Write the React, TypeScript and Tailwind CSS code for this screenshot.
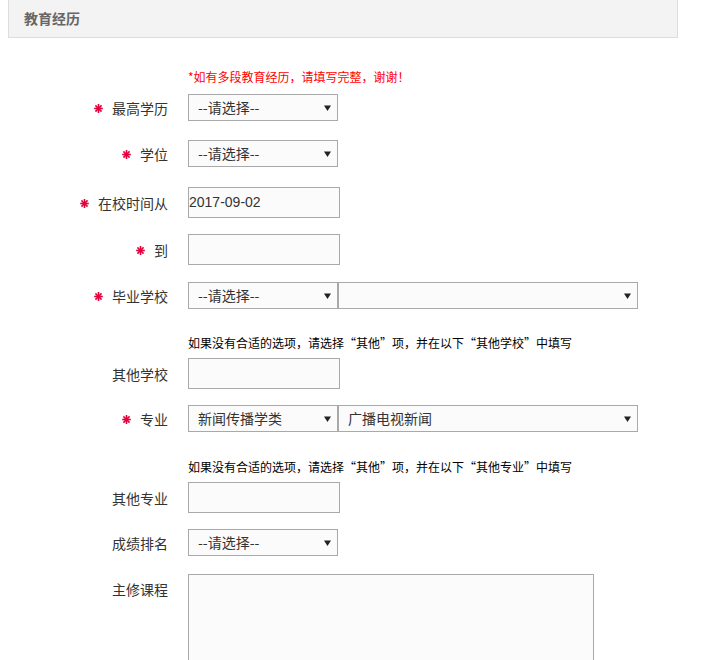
import React from "react";

const font = { fontFamily: '"Noto Sans CJK SC", "Liberation Sans", sans-serif' };

function Star() {
  return (
    <svg width="9" height="9" viewBox="0 0 9 9" className="mr-[9px] mt-[2px] shrink-0">
      <g stroke="#e2003b" strokeWidth="1.6" strokeLinecap="square">
        <line x1="4.5" y1="0.8" x2="4.5" y2="8.2" />
        <line x1="1" y1="4.5" x2="8" y2="4.5" />
        <line x1="2" y1="2" x2="7" y2="7" />
        <line x1="7" y1="2" x2="2" y2="7" />
      </g>
    </svg>
  );
}

function Arrow() {
  return (
    <svg width="7" height="6" viewBox="0 0 7 6" className="shrink-0">
      <path d="M0 0.5 H7 L3.5 6 Z" fill="#222" />
    </svg>
  );
}

function Select({ w, value }: { w: string; value?: string }) {
  return (
    <div className={`${w} h-[27px] border border-[#a9a9a9] bg-[#fbfbfb] flex items-center justify-between pl-[9px] pr-[6px] text-[14px] text-[#333]`}>
      <span>{value ?? ""}</span>
      <Arrow />
    </div>
  );
}

function Input({ value }: { value?: string }) {
  return (
    <div
      className="w-[152px] h-[31px] border border-[#a9a9a9] bg-[#fbfbfb] flex items-center text-[14px] text-[#333]"
      style={value ? { fontFamily: '"Liberation Sans", Arial, sans-serif' } : undefined}
    >
      {value}
    </div>
  );
}

function Row({
  label,
  req,
  className,
  top,
  children,
}: {
  label: string;
  req?: boolean;
  className?: string;
  top?: boolean;
  children: React.ReactNode;
}) {
  return (
    <div className={`flex ${top ? "items-start" : "items-center"} ${className ?? ""}`}>
      <div className={`w-[168px] flex items-center justify-end text-[14px] leading-[20px] text-[#333] ${top ? "pt-[5px]" : ""}`}>
        {req && <Star />}
        <span>{label}</span>
      </div>
      <div className="ml-[20px] flex">{children}</div>
    </div>
  );
}

function Note({ children, className }: { children: React.ReactNode; className?: string }) {
  return <div className={`pl-[188px] text-[12px] leading-[16px] ${className ?? ""}`}>{children}</div>;
}

export default function App() {
  const pick = "--请选择--";
  return (
    <div className="w-[723px] h-[660px] bg-white overflow-hidden" style={font}>
      <div className="ml-[8px] w-[670px] h-[38px] bg-[#f3f3f3] border-x border-b border-[#dddddd] flex items-center pl-[15px]">
        <span className="text-[14px] font-bold text-[#666]">教育经历</span>
      </div>

      <Note className="mt-[31px] text-[#ff0000]">*如有多段教育经历，请填写完整，谢谢！</Note>

      <Row label="最高学历" req className="mt-[9px]">
        <Select w="w-[150px]" value={pick} />
      </Row>
      <Row label="学位" req className="mt-[19px]">
        <Select w="w-[150px]" value={pick} />
      </Row>
      <Row label="在校时间从" req className="mt-[20px]">
        <Input value="2017-09-02" />
      </Row>
      <Row label="到" req className="mt-[16px]">
        <Input />
      </Row>
      <Row label="毕业学校" req className="mt-[17px]">
        <Select w="w-[150px]" value={pick} />
        <Select w="w-[300px]" />
      </Row>

      <Note className="mt-[26px] text-black">如果没有合适的选项，请选择“其他”项，并在以下“其他学校”中填写</Note>

      <Row label="其他学校" className="mt-[7px]">
        <Input />
      </Row>
      <Row label="专业" req className="mt-[16px]">
        <Select w="w-[150px]" value="新闻传播学类" />
        <Select w="w-[300px]" value="广播电视新闻" />
      </Row>

      <Note className="mt-[27px] text-black">如果没有合适的选项，请选择“其他”项，并在以下“其他专业”中填写</Note>

      <Row label="其他专业" className="mt-[7px]">
        <Input />
      </Row>
      <Row label="成绩排名" className="mt-[16px]">
        <Select w="w-[150px]" value={pick} />
      </Row>
      <Row label="主修课程" top className="mt-[18px]">
        <div className="w-[406px] h-[120px] border border-[#a9a9a9] bg-[#fbfbfb]" />
      </Row>
    </div>
  );
}
